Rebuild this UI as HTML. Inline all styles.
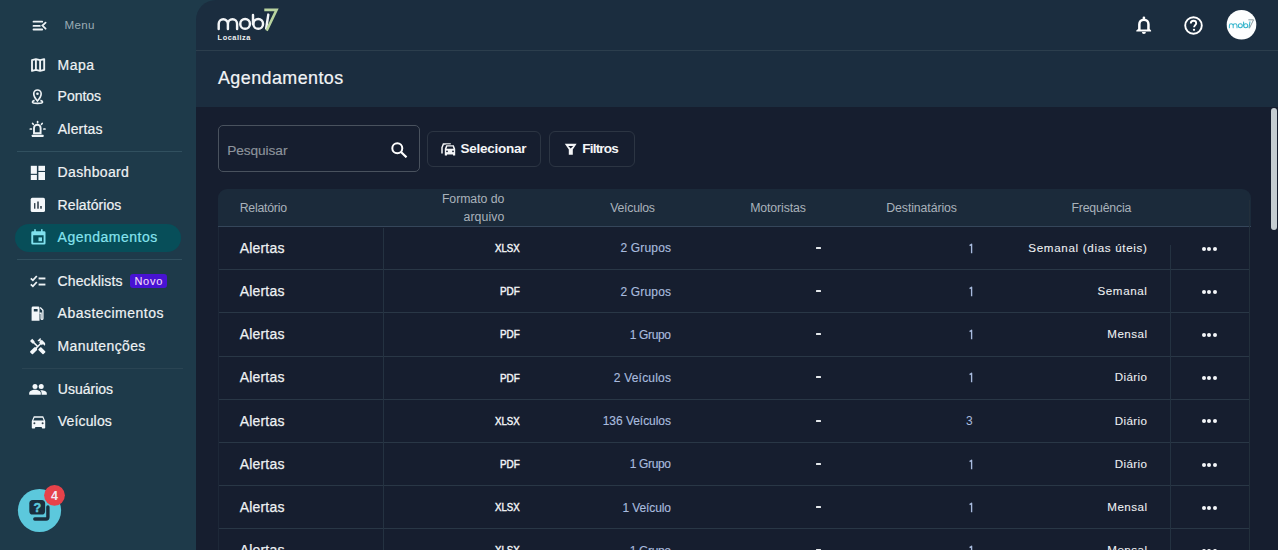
<!DOCTYPE html>
<html><head><meta charset="utf-8">
<style>
*{box-sizing:border-box;margin:0;padding:0}
html,body{width:1278px;height:550px;overflow:hidden}
body{background:#1e3a4a;font-family:"Liberation Sans",sans-serif;color:#fff;position:relative}
.a{position:absolute}
.t{position:absolute;white-space:nowrap}
.sep{position:absolute;height:1px;background:#31505f}
.row{position:absolute;left:218px;width:1032px;height:1px;background:#293746}
.vl{position:absolute;width:1px;background:#243241}
.dots{position:absolute;width:15px;height:5px}
.dots i{position:absolute;top:0;width:4.1px;height:4.1px;border-radius:50%;background:#f4f6f8}
</style></head>
<body>
<svg class="a" style="left:28px;top:16px" width="24" height="18" viewBox="28 16 24 18">
<g stroke="#eef3f6" stroke-width="1.8" stroke-linecap="round" fill="none">
<path d="M33.5 21.7 H42.2 M33.5 25.9 H39.8 M33.5 29.5 H42.2"/>
<path d="M45.6 22.6 L42.4 25.6 L45.6 28.7"/></g></svg>
<div class="t" style="left:64.50px;top:18.02px;font-size:11.60px;line-height:13.92px;color:#9aabb4;letter-spacing:0.333px">Menu</div>
<svg class="a" style="left:26px;top:54px" width="24" height="20" viewBox="26 54 24 20">
<g fill="none" stroke="#eef3f6" stroke-width="1.85" stroke-linejoin="round">
<path d="M32 60.1 L35.9 59.1 L40.1 60.2 L44.2 59.1 V69.9 L40.1 70.9 L35.9 69.9 L32 70.9 Z"/>
<path d="M35.9 59.1 V69.9 M40.1 60.2 V70.9"/></g></svg>
<div class="t" style="left:57.60px;top:56.75px;font-size:14.00px;line-height:16.80px;color:#eef2f4;letter-spacing:0.450px;-webkit-text-stroke:0.20px #eef2f4">Mapa</div>
<svg class="a" style="left:26px;top:86px" width="24" height="20" viewBox="26 86 24 20">
<g fill="none" stroke="#eef3f6" stroke-width="1.65">
<path d="M37.45 101 C35 98.2 33.75 96.2 33.75 93.7 A3.7 3.7 0 0 1 41.15 93.7 C41.15 96.2 39.9 98.2 37.45 101 Z"/>
<path d="M34.6 100.4 C33.1 100.8 32.45 101.3 32.45 102 C32.45 103 34.6 103.4 37.5 103.4 C40.4 103.4 42.55 103 42.55 102 C42.55 101.3 41.9 100.8 40.4 100.4"/></g>
<circle cx="37.45" cy="93.8" r="1.3" fill="#eef3f6"/></svg>
<div class="t" style="left:57.60px;top:87.75px;font-size:14.00px;line-height:16.80px;color:#eef2f4;letter-spacing:-0.040px;-webkit-text-stroke:0.20px #eef2f4">Pontos</div>
<svg class="a" style="left:24px;top:117px" width="26" height="22" viewBox="24 117 26 22">
<path d="M34 133.2 V128 A3.3 3.3 0 0 1 40.6 128 V133.2 Z" fill="none" stroke="#eef3f6" stroke-width="1.9"/>
<rect x="31.8" y="134.8" width="11.8" height="2.1" rx="0.4" fill="#eef3f6"/>
<g stroke="#eef3f6" stroke-width="1.7" stroke-linecap="round">
<path d="M37.6 121.6 V122.6 M32.6 123.5 L33.3 124.3 M42.2 123.5 L41.5 124.3 M30.3 129 H31.4 M43.9 129 H45"/></g></svg>
<div class="t" style="left:57.80px;top:120.55px;font-size:14.00px;line-height:16.80px;color:#eef2f4;letter-spacing:0.192px;-webkit-text-stroke:0.20px #eef2f4">Alertas</div>
<div class="sep" style="left:17px;top:151px;width:165px"></div>
<svg class="a" style="left:26px;top:162px" width="22" height="20" viewBox="26 162 22 20">
<g fill="#f3f7fa"><rect x="30.8" y="165.8" width="6.1" height="8"/><rect x="30.8" y="174.9" width="6.1" height="5.1"/>
<rect x="38.4" y="165.8" width="6.6" height="5.1"/><rect x="38.4" y="172" width="6.6" height="8"/></g></svg>
<div class="t" style="left:57.60px;top:164.45px;font-size:14.00px;line-height:16.80px;color:#eef2f4;letter-spacing:0.350px;-webkit-text-stroke:0.20px #eef2f4">Dashboard</div>
<svg class="a" style="left:26px;top:194px" width="22" height="20" viewBox="26 194 22 20">
<rect x="30.7" y="197.8" width="14.3" height="14.2" rx="1.6" fill="#f3f7fa"/>
<g fill="#33434f"><rect x="34" y="203.1" width="1.4" height="5.6"/><rect x="37.2" y="201.5" width="1.6" height="7.2"/><rect x="40.2" y="206" width="1.6" height="2.7"/></g></svg>
<div class="t" style="left:57.60px;top:196.55px;font-size:14.00px;line-height:16.80px;color:#eef2f4;letter-spacing:0.072px;-webkit-text-stroke:0.20px #eef2f4">Relatórios</div>
<div class="a" style="left:15px;top:223.5px;width:166px;height:28.5px;border-radius:15px;background:#074e59"></div>
<svg class="a" style="left:30.5px;top:229px" width="15" height="16" viewBox="0 0 15 16">
<path d="M1.6 2.3 H13.2 A1.3 1.3 0 0 1 14.5 3.6 V14.3 A1.3 1.3 0 0 1 13.2 15.6 H1.6 A1.3 1.3 0 0 1 0.3 14.3 V3.6 A1.3 1.3 0 0 1 1.6 2.3 Z M2.2 6.2 V13.8 H12.6 V6.2 Z" fill="#80e1ee" fill-rule="evenodd"/>
<rect x="3.2" y="0.2" width="1.6" height="3" fill="#80e1ee"/><rect x="10" y="0.2" width="1.6" height="3" fill="#80e1ee"/><rect x="7.5" y="8.4" width="3.5" height="3.8" fill="#80e1ee"/></svg>
<div class="t" style="left:57.60px;top:228.75px;font-size:14.00px;line-height:16.80px;color:#86e3ef;letter-spacing:0.500px;-webkit-text-stroke:0.20px #86e3ef">Agendamentos</div>
<div class="sep" style="left:17px;top:259px;width:165px"></div>
<svg class="a" style="left:30px;top:275px" width="16" height="13" viewBox="0 0 16 13">
<path d="M0.8 3.3 L2.9 5.3 L6.8 1" fill="none" stroke="#eef3f6" stroke-width="1.8"/><path d="M0.8 9.3 L2.9 11.3 L6.8 7" fill="none" stroke="#eef3f6" stroke-width="1.8"/>
<rect x="8.6" y="2.5" width="6.8" height="1.9" fill="#eef3f6"/><rect x="8.6" y="8.6" width="6.8" height="1.9" fill="#eef3f6"/></svg>
<div class="t" style="left:57.60px;top:272.75px;font-size:14.00px;line-height:16.80px;color:#eef2f4;letter-spacing:0.111px;-webkit-text-stroke:0.20px #eef2f4">Checklists</div>
<div class="a" style="left:129.8px;top:273.7px;width:36.8px;height:14.4px;border-radius:3px;background:#4813d3"></div>
<div class="t" style="left:134.40px;top:274.59px;font-size:11.00px;line-height:13.20px;color:#f1dcf6;letter-spacing:0.733px;-webkit-text-stroke:0.10px #f1dcf6">Novo</div>
<svg class="a" style="left:26px;top:303px" width="22" height="20" viewBox="26 303 22 20">
<path d="M33 306.6 H38.2 A1.3 1.3 0 0 1 39.5 307.9 V320.8 H31.6 V307.9 A1.4 1.4 0 0 1 33 306.6 Z M33.8 309 V311.6 H37.6 V309 Z" fill="#f3f7fa" fill-rule="evenodd"/>
<path d="M40.2 307.6 L42.9 310.3 V318.5 A0.9 0.9 0 0 1 41.1 318.5 V313.2 H39.6" fill="none" stroke="#f3f7fa" stroke-width="1.35"/></svg>
<div class="t" style="left:57.60px;top:305.05px;font-size:14.00px;line-height:16.80px;color:#eef2f4;letter-spacing:0.477px;-webkit-text-stroke:0.20px #eef2f4">Abastecimentos</div>
<svg class="a" style="left:26px;top:335px" width="22" height="22" viewBox="26 335 22 22">
<path transform="translate(28.5 337.3) scale(0.77)" fill="#f3f7fa" d="M21.67 18.17l-5.3-5.3h-.99l-2.54 2.54v.99l5.3 5.3c.39.39 1.020.39 1.41 0l2.12-2.12c.39-.38.39-1.02 0-1.41z M17.34 10.19l1.41-1.41 2.12 2.12c1.17-1.17 1.17-3.07 0-4.24l-3.54-3.54-1.41 1.41V1.71l-.7-.71-3.54 3.540.71.71h2.83l-1.41 1.41 1.06 1.06-2.89 2.89-4.13-4.130V5.06L4.83 2.04 2 4.87 5.030 7.9h1.41l4.13 4.13-.85.85H7.6l-5.3 5.3c-.39.39-.39 1.02 0 1.41l2.12 2.12c.39.39 1.02.39 1.41 0l5.3-5.3v-2.12l5.15-5.15 1.060 1.05z"/></svg>
<div class="t" style="left:57.60px;top:337.55px;font-size:14.00px;line-height:16.80px;color:#eef2f4;letter-spacing:0.365px;-webkit-text-stroke:0.20px #eef2f4">Manutenções</div>
<div class="sep" style="left:22px;top:367.5px;width:161px;background:#2a4453"></div>
<svg class="a" style="left:29px;top:383px" width="18" height="12" viewBox="0 0 18 12">
<circle cx="6" cy="3.4" r="2.5" fill="#f3f7fa"/><circle cx="12.2" cy="3.4" r="2.5" fill="#f3f7fa"/>
<path d="M0.2 11.8 V10.2 C0.2 8 3.2 6.8 6 6.8 C8.8 6.8 11.8 8 11.8 10.2 V11.8 Z" fill="#f3f7fa"/>
<path d="M12.6 11.8 V10.2 C12.6 9 12.1 8 11.2 7.2 C14.2 6.9 17.8 8 17.8 10.2 V11.8 Z" fill="#f3f7fa"/></svg>
<div class="t" style="left:57.80px;top:381.05px;font-size:14.00px;line-height:16.80px;color:#eef2f4;letter-spacing:0.007px;-webkit-text-stroke:0.20px #eef2f4">Usuários</div>
<svg class="a" style="left:30.5px;top:416px" width="15" height="13" viewBox="0 0 15 13">
<path d="M2.8 0.3 H12.2 L14.2 5 V11.8 A0.8 0.8 0 0 1 13.4 12.6 H11.6 A0.8 0.8 0 0 1 10.8 11.8 V11 H4.2 V11.8 A0.8 0.8 0 0 1 3.4 12.6 H1.6 A0.8 0.8 0 0 1 0.8 11.8 V5 Z M3.5 1.7 L2.3 4.4 H12.7 L11.5 1.7 Z" fill="#f3f7fa" fill-rule="evenodd"/>
<circle cx="3.4" cy="7.3" r="1" fill="#33434f"/><circle cx="11.6" cy="7.3" r="1" fill="#33434f"/></svg>
<div class="t" style="left:57.80px;top:413.25px;font-size:14.00px;line-height:16.80px;color:#eef2f4;letter-spacing:0.157px;-webkit-text-stroke:0.20px #eef2f4">Veículos</div>
<svg class="a" style="left:14px;top:480px" width="56" height="56" viewBox="14 480 56 56">
<circle cx="39.5" cy="510.5" r="21.6" fill="#5cc8dc"/>
<path d="M34.8 519 H46 A2 2 0 0 0 47.9 517 V507" fill="none" stroke="#1a2f3e" stroke-width="3.4" stroke-linecap="round"/>
<rect x="29.3" y="499.9" width="15.8" height="14.7" rx="3.6" fill="#1a2f3e" stroke="#5cc8dc" stroke-width="1.4"/>
<rect x="29.3" y="499.9" width="15.8" height="14.7" rx="3.6" fill="#1a2f3e"/>
<text x="37.3" y="511.7" font-size="12.5" font-weight="bold" fill="#5cc8dc" stroke="#5cc8dc" stroke-width="0.5" text-anchor="middle" font-family="Liberation Sans">?</text>
<circle cx="54.5" cy="495.3" r="10.4" fill="#e6424a"/>
<text x="54.6" y="499.9" font-size="12.5" font-weight="bold" fill="#f2e9f6" text-anchor="middle" font-family="Liberation Sans">4</text>
</svg>
<div class="a" style="left:196px;top:0;width:1082px;height:107px;background:#1b2d3f;border-top-left-radius:20px"></div>
<div class="a" style="left:196px;top:50px;width:1082px;height:1px;background:#2c3e4d"></div>
<div class="a" style="left:196px;top:107px;width:1082px;height:443px;background:#161e2f"></div>
<div class="a" style="left:1270.5px;top:107.5px;width:6.5px;height:122.5px;border-radius:4px;background:#c5cdd2"></div>
<svg class="a" style="left:214px;top:4px" width="68" height="40" viewBox="214 4 68 40">
<g fill="none" stroke="#f3f5f7" stroke-width="2.45" stroke-linecap="round">
<path d="M218.7 29 V23.9 A4.6 4.6 0 0 1 227.9 23.9 V29 M227.9 23.9 A4.6 4.6 0 0 1 237.1 23.9 V29"/>
<circle cx="245.1" cy="23.9" r="4.85"/>
<path d="M253 15 V23.9"/><circle cx="258.2" cy="23.9" r="4.85"/>
<path d="M268.3 14.6 L266.2 28.4"/>
</g>
<path d="M264.3 9.9 H276.6 L266.6 30.6" fill="none" stroke="#b9d39f" stroke-width="2.6" stroke-linejoin="miter"/>
</svg>
<div class="t" style="left:217.60px;top:34.40px;font-size:7.40px;line-height:8.88px;color:#eef1f3;font-weight:700;letter-spacing:0.529px">Localiza</div>
<svg class="a" style="left:1132px;top:12px" width="24" height="26" viewBox="1132 12 24 26">
<path d="M1136.3 31.6 V30.4 L1138.1 28.9 V24.2 A5.8 5.8 0 0 1 1149.7 24.2 V28.9 L1151.1 30.4 V31.6 Z M1140.6 29.4 V24.2 A3.3 3.3 0 0 1 1147.2 24.2 V29.4 Z" fill="#fff" fill-rule="evenodd"/>
<circle cx="1143.9" cy="17.9" r="1.35" fill="#fff"/>
<path d="M1141.9 32.1 H1145.9 A2 2 0 0 1 1141.9 32.1 Z" fill="#fff"/></svg>
<svg class="a" style="left:1184px;top:16px" width="19" height="19" viewBox="0 0 19 19">
<circle cx="9.5" cy="9.5" r="8.3" fill="none" stroke="#fff" stroke-width="1.9"/>
<path d="M6.8 7.4 C6.8 5.8 8 4.8 9.5 4.8 C11 4.8 12.2 5.8 12.2 7.2 C12.2 9 10.1 9.2 10.1 11.2" fill="none" stroke="#fff" stroke-width="1.9"/>
<circle cx="10" cy="13.8" r="1.15" fill="#fff"/></svg>
<svg class="a" style="left:1222px;top:6px" width="40" height="38" viewBox="1222 6 40 38">
<circle cx="1241.5" cy="24.7" r="14.8" fill="#fdfefe"/>
<g transform="translate(1138.6 15.75) scale(0.415)">
<g fill="none" stroke="#35b5cc" stroke-width="2.5" stroke-linecap="round">
<path d="M218.7 29 V23.9 A4.6 4.6 0 0 1 227.9 23.9 V29 M227.9 23.9 A4.6 4.6 0 0 1 237.1 23.9 V29"/>
<circle cx="245.1" cy="23.9" r="4.85"/>
<path d="M253 15 V23.9"/><circle cx="258.2" cy="23.9" r="4.85"/>
<path d="M268.3 14.6 L266.2 28.4"/>
</g>
<path d="M264.5 9.8 H277 L266.8 30.5" fill="none" stroke="#7d8f96" stroke-width="2.2"/>
</g></svg>
<div class="t" style="left:218.00px;top:67.66px;font-size:17.90px;line-height:21.48px;color:#f2f4f6;letter-spacing:0.436px;-webkit-text-stroke:0.20px #f2f4f6">Agendamentos</div>
<div class="a" style="left:217.5px;top:125px;width:202px;height:46.5px;border:1px solid #49525e;border-radius:5px"></div>
<div class="t" style="left:227.20px;top:143.33px;font-size:13.70px;line-height:16.44px;color:#8d949c;letter-spacing:-0.075px;-webkit-text-stroke:0.15px #8d949c">Pesquisar</div>
<svg class="a" style="left:390.5px;top:141.5px" width="17" height="16" viewBox="0 0 17 16">
<circle cx="6.3" cy="6.3" r="5" fill="none" stroke="#fff" stroke-width="2"/><path d="M10 10 L15.5 15.3" stroke="#fff" stroke-width="2.2"/></svg>
<div class="a" style="left:427px;top:131px;width:114px;height:35.5px;border:1px solid #2c3543;border-radius:6px"></div>
<svg class="a" style="left:436px;top:138px" width="24" height="22" viewBox="436 138 24 22">
<path d="M442 153.6 V147.6 L443.4 144 H450.8" fill="none" stroke="#f4f5f7" stroke-width="1.5"/>
<path d="M446.2 145.2 H453.8 L455.2 148.8 V155.6 H453 V154.4 H447 V155.6 H444.8 V148.8 Z" fill="none" stroke="#161e2f" stroke-width="1.4"/>
<path d="M446.2 145.2 H453.8 L455.2 148.8 V155.6 H453 V154.4 H447 V155.6 H444.8 V148.8 Z M447.3 146.5 L446.5 148.7 H453.5 L452.7 146.5 Z" fill="#f4f5f7" fill-rule="evenodd"/>
<circle cx="447" cy="151.3" r="0.9" fill="#161e2f"/><circle cx="453" cy="151.3" r="0.9" fill="#161e2f"/></svg>
<div class="t" style="left:460.50px;top:140.52px;font-size:13.50px;line-height:16.20px;color:#f4f5f7;font-weight:700;letter-spacing:-0.256px">Selecionar</div>
<div class="a" style="left:548.5px;top:131px;width:86px;height:35.5px;border:1px solid #2c3543;border-radius:6px"></div>
<svg class="a" style="left:560px;top:138px" width="24" height="22" viewBox="560 138 24 22">
<path d="M564.8 143.8 H576.6 L572.8 149.4 V154.8 H568.8 V149.4 Z M568.2 146.1 H573.2 L570.7 148.6 Z" fill="#f4f5f7" fill-rule="evenodd"/></svg>
<div class="t" style="left:582.30px;top:140.52px;font-size:13.50px;line-height:16.20px;color:#f4f5f7;font-weight:700;letter-spacing:-0.792px">Filtros</div>
<div class="a" style="left:218px;top:189px;width:1033px;height:38px;background:#1b2a3a;border-top-left-radius:9px;border-top-right-radius:9px;border-bottom:1px solid #35465a"></div>
<div class="t" style="left:239.70px;top:200.66px;font-size:12.30px;line-height:14.76px;color:#a9b2ba;letter-spacing:-0.238px">Relatório</div>
<div class="t" style="left:441.90px;top:191.56px;font-size:12.30px;line-height:14.76px;color:#a9b2ba;letter-spacing:-0.056px">Formato do</div>
<div class="t" style="left:463.50px;top:209.66px;font-size:12.30px;line-height:14.76px;color:#a9b2ba;letter-spacing:0.075px">arquivo</div>
<div class="t" style="left:610.20px;top:200.66px;font-size:12.30px;line-height:14.76px;color:#a9b2ba;letter-spacing:-0.243px">Veículos</div>
<div class="t" style="left:750.20px;top:200.66px;font-size:12.30px;line-height:14.76px;color:#a9b2ba;letter-spacing:-0.106px">Motoristas</div>
<div class="t" style="left:886.30px;top:200.66px;font-size:12.30px;line-height:14.76px;color:#a9b2ba;letter-spacing:-0.092px">Destinatários</div>
<div class="t" style="left:1071.40px;top:200.66px;font-size:12.30px;line-height:14.76px;color:#a9b2ba;letter-spacing:-0.172px">Frequência</div>
<div class="t" style="left:239.70px;top:239.75px;font-size:14.00px;line-height:16.80px;color:#eef1f3;letter-spacing:0.192px;-webkit-text-stroke:0.25px #eef1f3">Alertas</div>
<div class="t" style="left:495.40px;top:241.99px;font-size:11.00px;line-height:13.20px;color:#f1f3f5;transform:scaleX(0.8774);transform-origin:0 0;-webkit-text-stroke:0.45px #f1f3f5">XLSX</div>
<div class="t" style="left:620.40px;top:241.44px;font-size:12.00px;line-height:14.40px;color:#a8bbde;letter-spacing:0.179px;-webkit-text-stroke:0.15px #a8bbde">2 Grupos</div>
<div class="a" style="left:815.8px;top:247.0px;width:5.4px;height:2px;background:#e4e8eb;border-radius:0.5px"></div>
<svg class="a" style="left:966px;top:242.8px" width="8" height="12" viewBox="0 0 8 12"><path d="M3.6 2.6 L5.6 1.2 V10.2" fill="none" stroke="#a8bbde" stroke-width="1.35" stroke-linejoin="round"/></svg>
<div class="t" style="left:1028.30px;top:240.72px;font-size:11.60px;line-height:13.92px;color:#eef1f3;letter-spacing:0.682px;-webkit-text-stroke:0.08px #eef1f3">Semanal (dias úteis)</div>
<div class="dots" style="left:1201.8px;top:246.5px"><i style="left:0"></i><i style="left:5.5px"></i><i style="left:11px"></i></div>
<div class="row" style="top:269.2px"></div>
<div class="t" style="left:239.70px;top:282.95px;font-size:14.00px;line-height:16.80px;color:#eef1f3;letter-spacing:0.192px;-webkit-text-stroke:0.25px #eef1f3">Alertas</div>
<div class="t" style="left:500.30px;top:285.19px;font-size:11.00px;line-height:13.20px;color:#f1f3f5;transform:scaleX(0.9000);transform-origin:0 0;-webkit-text-stroke:0.45px #f1f3f5">PDF</div>
<div class="t" style="left:620.40px;top:284.64px;font-size:12.00px;line-height:14.40px;color:#a8bbde;letter-spacing:0.179px;-webkit-text-stroke:0.15px #a8bbde">2 Grupos</div>
<div class="a" style="left:815.8px;top:290.0px;width:5.4px;height:2px;background:#e4e8eb;border-radius:0.5px"></div>
<svg class="a" style="left:966px;top:286.0px" width="8" height="12" viewBox="0 0 8 12"><path d="M3.6 2.6 L5.6 1.2 V10.2" fill="none" stroke="#a8bbde" stroke-width="1.35" stroke-linejoin="round"/></svg>
<div class="t" style="left:1097.40px;top:283.92px;font-size:11.60px;line-height:13.92px;color:#eef1f3;letter-spacing:0.633px;-webkit-text-stroke:0.08px #eef1f3">Semanal</div>
<div class="dots" style="left:1201.8px;top:289.7px"><i style="left:0"></i><i style="left:5.5px"></i><i style="left:11px"></i></div>
<div class="row" style="top:312.4px"></div>
<div class="t" style="left:239.70px;top:326.15px;font-size:14.00px;line-height:16.80px;color:#eef1f3;letter-spacing:0.192px;-webkit-text-stroke:0.25px #eef1f3">Alertas</div>
<div class="t" style="left:500.30px;top:328.39px;font-size:11.00px;line-height:13.20px;color:#f1f3f5;transform:scaleX(0.9000);transform-origin:0 0;-webkit-text-stroke:0.45px #f1f3f5">PDF</div>
<div class="t" style="left:629.70px;top:327.84px;font-size:12.00px;line-height:14.40px;color:#a8bbde;letter-spacing:-0.342px;-webkit-text-stroke:0.15px #a8bbde">1 Grupo</div>
<div class="a" style="left:815.8px;top:333.0px;width:5.4px;height:2px;background:#e4e8eb;border-radius:0.5px"></div>
<svg class="a" style="left:966px;top:329.2px" width="8" height="12" viewBox="0 0 8 12"><path d="M3.6 2.6 L5.6 1.2 V10.2" fill="none" stroke="#a8bbde" stroke-width="1.35" stroke-linejoin="round"/></svg>
<div class="t" style="left:1107.30px;top:327.12px;font-size:11.60px;line-height:13.92px;color:#eef1f3;letter-spacing:0.460px;-webkit-text-stroke:0.08px #eef1f3">Mensal</div>
<div class="dots" style="left:1201.8px;top:332.9px"><i style="left:0"></i><i style="left:5.5px"></i><i style="left:11px"></i></div>
<div class="row" style="top:355.6px"></div>
<div class="t" style="left:239.70px;top:369.35px;font-size:14.00px;line-height:16.80px;color:#eef1f3;letter-spacing:0.192px;-webkit-text-stroke:0.25px #eef1f3">Alertas</div>
<div class="t" style="left:500.30px;top:371.59px;font-size:11.00px;line-height:13.20px;color:#f1f3f5;transform:scaleX(0.9000);transform-origin:0 0;-webkit-text-stroke:0.45px #f1f3f5">PDF</div>
<div class="t" style="left:613.70px;top:371.04px;font-size:12.00px;line-height:14.40px;color:#a8bbde;letter-spacing:0.217px;-webkit-text-stroke:0.15px #a8bbde">2 Veículos</div>
<div class="a" style="left:815.8px;top:376.0px;width:5.4px;height:2px;background:#e4e8eb;border-radius:0.5px"></div>
<svg class="a" style="left:966px;top:372.4px" width="8" height="12" viewBox="0 0 8 12"><path d="M3.6 2.6 L5.6 1.2 V10.2" fill="none" stroke="#a8bbde" stroke-width="1.35" stroke-linejoin="round"/></svg>
<div class="t" style="left:1114.80px;top:370.32px;font-size:11.60px;line-height:13.92px;color:#eef1f3;letter-spacing:0.380px;-webkit-text-stroke:0.08px #eef1f3">Diário</div>
<div class="dots" style="left:1201.8px;top:376.1px"><i style="left:0"></i><i style="left:5.5px"></i><i style="left:11px"></i></div>
<div class="row" style="top:398.8px"></div>
<div class="t" style="left:239.70px;top:412.55px;font-size:14.00px;line-height:16.80px;color:#eef1f3;letter-spacing:0.192px;-webkit-text-stroke:0.25px #eef1f3">Alertas</div>
<div class="t" style="left:495.40px;top:414.79px;font-size:11.00px;line-height:13.20px;color:#f1f3f5;transform:scaleX(0.8774);transform-origin:0 0;-webkit-text-stroke:0.45px #f1f3f5">XLSX</div>
<div class="t" style="left:602.70px;top:414.24px;font-size:12.00px;line-height:14.40px;color:#a8bbde;letter-spacing:-0.036px;-webkit-text-stroke:0.15px #a8bbde">136 Veículos</div>
<div class="a" style="left:815.8px;top:420.0px;width:5.4px;height:2px;background:#e4e8eb;border-radius:0.5px"></div>
<div class="t" style="left:966.05px;top:414.24px;font-size:12.00px;line-height:14.40px;color:#a8bbde">3</div>
<div class="t" style="left:1114.80px;top:413.52px;font-size:11.60px;line-height:13.92px;color:#eef1f3;letter-spacing:0.380px;-webkit-text-stroke:0.08px #eef1f3">Diário</div>
<div class="dots" style="left:1201.8px;top:419.3px"><i style="left:0"></i><i style="left:5.5px"></i><i style="left:11px"></i></div>
<div class="row" style="top:442.0px"></div>
<div class="t" style="left:239.70px;top:455.75px;font-size:14.00px;line-height:16.80px;color:#eef1f3;letter-spacing:0.192px;-webkit-text-stroke:0.25px #eef1f3">Alertas</div>
<div class="t" style="left:500.30px;top:457.99px;font-size:11.00px;line-height:13.20px;color:#f1f3f5;transform:scaleX(0.9000);transform-origin:0 0;-webkit-text-stroke:0.45px #f1f3f5">PDF</div>
<div class="t" style="left:629.70px;top:457.44px;font-size:12.00px;line-height:14.40px;color:#a8bbde;letter-spacing:-0.342px;-webkit-text-stroke:0.15px #a8bbde">1 Grupo</div>
<div class="a" style="left:815.8px;top:463.0px;width:5.4px;height:2px;background:#e4e8eb;border-radius:0.5px"></div>
<svg class="a" style="left:966px;top:458.8px" width="8" height="12" viewBox="0 0 8 12"><path d="M3.6 2.6 L5.6 1.2 V10.2" fill="none" stroke="#a8bbde" stroke-width="1.35" stroke-linejoin="round"/></svg>
<div class="t" style="left:1114.80px;top:456.72px;font-size:11.60px;line-height:13.92px;color:#eef1f3;letter-spacing:0.380px;-webkit-text-stroke:0.08px #eef1f3">Diário</div>
<div class="dots" style="left:1201.8px;top:462.5px"><i style="left:0"></i><i style="left:5.5px"></i><i style="left:11px"></i></div>
<div class="row" style="top:485.2px"></div>
<div class="t" style="left:239.70px;top:498.95px;font-size:14.00px;line-height:16.80px;color:#eef1f3;letter-spacing:0.192px;-webkit-text-stroke:0.25px #eef1f3">Alertas</div>
<div class="t" style="left:495.40px;top:501.19px;font-size:11.00px;line-height:13.20px;color:#f1f3f5;transform:scaleX(0.8774);transform-origin:0 0;-webkit-text-stroke:0.45px #f1f3f5">XLSX</div>
<div class="t" style="left:622.40px;top:500.64px;font-size:12.00px;line-height:14.40px;color:#a8bbde;letter-spacing:-0.094px;-webkit-text-stroke:0.15px #a8bbde">1 Veículo</div>
<div class="a" style="left:815.8px;top:506.0px;width:5.4px;height:2px;background:#e4e8eb;border-radius:0.5px"></div>
<svg class="a" style="left:966px;top:502.0px" width="8" height="12" viewBox="0 0 8 12"><path d="M3.6 2.6 L5.6 1.2 V10.2" fill="none" stroke="#a8bbde" stroke-width="1.35" stroke-linejoin="round"/></svg>
<div class="t" style="left:1107.30px;top:499.92px;font-size:11.60px;line-height:13.92px;color:#eef1f3;letter-spacing:0.460px;-webkit-text-stroke:0.08px #eef1f3">Mensal</div>
<div class="dots" style="left:1201.8px;top:505.7px"><i style="left:0"></i><i style="left:5.5px"></i><i style="left:11px"></i></div>
<div class="row" style="top:528.4px"></div>
<div class="t" style="left:239.70px;top:542.15px;font-size:14.00px;line-height:16.80px;color:#eef1f3;letter-spacing:0.192px;-webkit-text-stroke:0.25px #eef1f3">Alertas</div>
<div class="t" style="left:495.40px;top:544.39px;font-size:11.00px;line-height:13.20px;color:#f1f3f5;transform:scaleX(0.8774);transform-origin:0 0;-webkit-text-stroke:0.45px #f1f3f5">XLSX</div>
<div class="t" style="left:629.70px;top:543.84px;font-size:12.00px;line-height:14.40px;color:#a8bbde;letter-spacing:-0.342px;-webkit-text-stroke:0.15px #a8bbde">1 Grupo</div>
<div class="a" style="left:815.8px;top:549.0px;width:5.4px;height:2px;background:#e4e8eb;border-radius:0.5px"></div>
<svg class="a" style="left:966px;top:545.2px" width="8" height="12" viewBox="0 0 8 12"><path d="M3.6 2.6 L5.6 1.2 V10.2" fill="none" stroke="#a8bbde" stroke-width="1.35" stroke-linejoin="round"/></svg>
<div class="t" style="left:1107.30px;top:543.12px;font-size:11.60px;line-height:13.92px;color:#eef1f3;letter-spacing:0.460px;-webkit-text-stroke:0.08px #eef1f3">Mensal</div>
<div class="dots" style="left:1201.8px;top:548.9px"><i style="left:0"></i><i style="left:5.5px"></i><i style="left:11px"></i></div>
<div class="row" style="top:571.6px"></div>
<div class="vl" style="left:383px;top:228px;height:322px"></div>
<div class="vl" style="left:218px;top:227px;height:323px;background:#1d2838"></div>
<div class="vl" style="left:1170px;top:245px;height:305px"></div>
<div class="vl" style="left:1249px;top:200px;height:350px;background:#222f3b"></div>
</body></html>
